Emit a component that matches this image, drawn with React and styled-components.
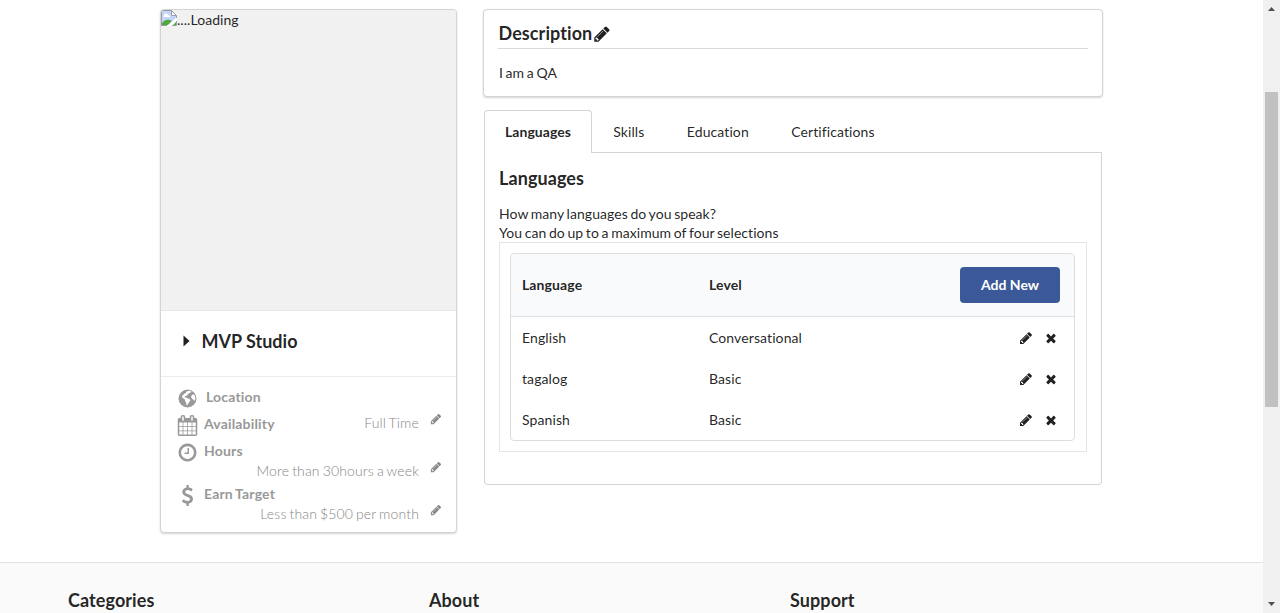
import React from 'react';
import styled, { createGlobalStyle } from 'styled-components';

const GlobalStyle = createGlobalStyle`
  *, *::before, *::after { box-sizing: border-box; }
  html, body { margin: 0; height: 100%; overflow: hidden; background: #fff; }
  body {
    font: 400 14px/19px Lato, "Liberation Sans", sans-serif;
    color: rgba(0, 0, 0, 0.87);
    letter-spacing: 0.05px;
    word-spacing: -1px;
  }
  svg { display: block; fill: currentColor; flex: none; }
  h3, p { margin: 0; }
`;

const Window = styled.div`
  display: flex;
  height: 613px;
  overflow: hidden;
`;
const Page = styled.div`
  flex: 1;
  min-width: 0;
  display: flex;
  flex-direction: column;
`;
const Columns = styled.main`
  display: flex;
  align-items: flex-start;
  gap: 26px;
  height: 562px;
  padding: 9px 0 0 160px;
`;

const Panel = styled.section`
  border: 1px solid #d4d4d5;
  border-radius: 4px;
  box-shadow: 0 1px 2px #d4d4d5;
  background: #fff;
  overflow: hidden;
`;
const ProfileCard = styled(Panel)`
  width: 297px;
  height: 524px;
`;
const Photo = styled.div`
  display: flex;
  align-items: flex-start;
  height: 300px;
  background: #f1f1f1;
`;
const Owner = styled.div`
  display: flex;
  align-items: center;
  height: 67px;
  padding: 0 0 4px 20px;
  border-top: 1px solid #e6e6e6;
  border-bottom: 1px solid #ececec;
`;
const Heading = styled.h3`
  font-size: 18px;
  line-height: 23px;
  font-weight: 700;
  letter-spacing: 0.08px;
  word-spacing: 0;
`;
const OwnerName = styled(Heading)`
  padding-left: 10.5px;
  letter-spacing: 0;
`;
const Details = styled.div`
  padding: 10px 14px 0 16px;
  color: #999;
`;
const Detail = styled.div`
  display: flex;
  flex-wrap: ${(p) => (p.$stacked ? 'wrap' : 'nowrap')};
  align-content: flex-start;
  height: ${(p) => (p.$stacked ? 43 : 27)}px;
`;
const DetailIcon = styled.div`
  display: flex;
  justify-content: center;
  width: 21px;
  height: 20px;
  padding-top: 1px;
`;
const DetailLabel = styled.span`
  font-weight: 700;
  letter-spacing: 0.17px;
  padding-left: ${(p) => (p.$inset ? 8 : 6)}px;
`;
const DetailValue = styled.div`
  display: flex;
  flex: 1 0 ${(p) => (p.$stacked ? '100%' : 'auto')};
  justify-content: flex-end;
  gap: 11px;
  margin-top: ${(p) => (p.$stacked ? 0 : -1)}px;
  font-weight: 300;
  letter-spacing: 0.15px;
  color: #868686;
`;

const Content = styled.div`
  width: 620px;
`;
const Description = styled(Panel)`
  height: 88px;
  padding: 12px 14px 0;
`;
const DescriptionTitle = styled.div`
  display: flex;
  height: 27px;
  padding-left: 0.5px;
  border-bottom: 1px solid #d9d9d9;
`;
const TitleIcon = styled.span`
  padding: 3px 0 0 1px;
`;
const DescriptionText = styled.p`
  padding: 14px 0 0 1px;
`;
const Tabs = styled.nav`
  display: flex;
  height: 43px;
  margin: 13px 1px 0;
`;
const Tab = styled.div`
  padding: ${(p) => (p.$active ? '11px 20px 0' : '12px 21.2px 0')};
  border: 1px solid #d4d4d5;
  border-width: ${(p) => (p.$active ? '1px 1px 0' : '0 0 1px')};
  border-radius: ${(p) => (p.$active ? '4px 4px 0 0' : '0')};
  font-weight: ${(p) => (p.$active ? 700 : 400)};
  letter-spacing: ${(p) => (p.$active ? 0.05 : 0.1)}px;
`;
const TabLine = styled.div`
  flex: 1;
  border-bottom: 1px solid #d4d4d5;
`;
const TabBody = styled.section`
  height: 332px;
  margin: 0 1px;
  padding: 14px 14px 0;
  border: 1px solid #d4d4d5;
  border-top: 0;
  border-radius: 0 0 4px 4px;
`;
const Hint = styled.p`
  padding-top: 14px;
  white-space: pre-line;
`;
const TableFrame = styled.div`
  height: 210px;
  padding: 10px 11px 0 10px;
  border: 1px solid #e4e5e6;
`;
const Table = styled.div`
  height: 188px;
  border: 1px solid #dcdddd;
  border-radius: 4px;
  overflow: hidden;
`;
const Row = styled.div`
  display: grid;
  grid-template-columns: 187px 1fr auto;
  align-items: center;
  height: 41px;
  padding: 0 16px 0 11px;
  letter-spacing: 0.1px;
`;
const HeadRow = styled(Row)`
  height: 63px;
  padding-right: 14px;
  background: #f9fafb;
  border-bottom: 1px solid #dfe2e4;
  font-weight: 700;
`;
const HeadCell = styled.span`
  padding-bottom: 1px;
`;
const AddButton = styled.button`
  width: 100px;
  height: 36px;
  border: 0;
  border-radius: 4px;
  background: #3b5998;
  color: #fff;
  font: 700 14px/14px Lato, sans-serif;
`;
const Actions = styled.div`
  display: flex;
  gap: 11px;
`;

const Footer = styled.footer`
  display: grid;
  grid-template-columns: 361px 361px 1fr;
  flex: 1;
  padding: 26px 0 0 68px;
  border-top: 1px solid #e2e3e3;
  background: #fafafa;
`;

const ScrollTrack = styled.div`
  display: flex;
  flex-direction: column;
  align-items: center;
  width: 17px;
  padding: 7px 2px 0;
  background: #f0f0f0;
`;
const ScrollThumb = styled.div`
  flex: none;
  width: 13px;
  height: 315px;
  margin: 81px 0 195px;
  background: #c1c1c1;
`;

const paths = {
  pencil:
    'M491 1536l91-91-235-235-91 91v107h128v128h107zm523-928q0-22-22-22-10 0-17 7l-542 542q-7 7-7 17 0 22 22 22 10 0 17-7l542-542q7-7 7-17zm-54-192l416 416-832 832h-416v-416zm683 96q0 53-37 90l-166 166-416-416 166-165q36-38 90-38 53 0 91 38l235 234q37 39 37 91z',
  times:
    'M1490 1322q0 40-28 68l-136 136q-28 28-68 28t-68-28l-294-294-294 294q-28 28-68 28t-68-28l-136-136q-28-28-28-68t28-68l294-294-294-294q-28-28-28-68t28-68l136-136q28-28 68-28t68 28l294 294 294-294q28-28 68-28t68 28l136 136q28 28 28 68t-28 68l-294 294 294 294q28 28 28 68z',
  calendar:
    'M192 1664h288v-288h-288v288zm352 0h320v-288h-320v288zm-352-352h288v-320h-288v320zm352 0h320v-320h-320v320zm-352-384h288v-288h-288v288zm736 736h320v-288h-320v288zm-384-736h320v-288h-320v288zm768 736h288v-288h-288v288zm-384-352h320v-320h-320v320zm-352-864v-288q0-13-9.5-22.5t-22.5-9.5h-64q-13 0-22.5 9.5t-9.5 22.5v288q0 13 9.5 22.5t22.5 9.5h64q13 0 22.5-9.5t9.5-22.5zm736 864h288v-320h-288v320zm-384-384h320v-288h-320v288zm384 0h288v-288h-288v288zm32-480v-288q0-13-9.5-22.5t-22.5-9.5h-64q-13 0-22.5 9.5t-9.5 22.5v288q0 13 9.5 22.5t22.5 9.5h64q13 0 22.5-9.5t9.5-22.5zm384-64v1280q0 52-38 90t-90 38h-1408q-52 0-90-38t-38-90v-1280q0-52 38-90t90-38h128v-96q0-66 47-113t113-47h64q66 0 113 47t47 113v96h384v-96q0-66 47-113t113-47h64q66 0 113 47t47 113v96h128q52 0 90 38t38 90z',
  clock:
    'M1024 544v448q0 14-9 23t-23 9h-320q-14 0-23-9t-9-23v-64q0-14 9-23t23-9h224v-352q0-14 9-23t23-9h64q14 0 23 9t9 23zm416 352q0-148-73-273t-198-198-273-73-273 73-198 198-73 273 73 273 198 198 273 73 273-73 198-198 73-273zm224 0q0 209-103 385.5t-279.5 279.5-385.5 103-385.5-103-279.5-279.5-103-385.5 103-385.5 279.5-279.5 385.5-103 385.5 103 279.5 279.5 103 385.5z',
  dollar:
    'M1362 1185q0 153-99.5 263.5t-258.5 136.5v175q0 14-9 23t-23 9h-135q-13 0-22.5-9.5t-9.5-22.5v-175q-66-9-127.5-31t-101.5-44.5-74-48-46.5-37.5-17.5-18q-17-21-2-41l103-135q7-10 23-12 15-2 24 9l2 2q113 99 243 125 37 8 74 8 81 0 142.5-43t61.5-122q0-28-15-53t-33.5-42-58.5-37.5-66-32-80-32.5q-39-16-61.5-25t-61.5-26.5-62.5-31-56.5-35.5-53.5-42.5-43.5-49-35.5-58-21-66.5-8.5-78q0-138 98-242t255-134v-180q0-13 9.5-22.5t22.5-9.5h135q14 0 23 9t9 23v176q57 6 110.5 23t87 33.5 63.5 37.5 39 29 15 14q17 18 5 38l-81 146q-8 15-23 16-14 3-27-7-3-3-14.5-12t-39-26.5-58.5-32-74.5-26-85.5-11.5q-95 0-155 43t-60 111q0 26 8.5 48t29.5 41.5 39.5 33 56 31 60.5 27 70 27.5q53 20 81 31.5t76 35 75.5 42.5 62 50 53 63.5 31.5 76.5 13 94z',
  globe:
    'M896 128a768 768 0 1 0 0 1536a768 768 0 1 0 0-1536zM960 225L1130 250L1250 330L1180 370L1100 420L1010 440L940 540L850 610L790 690L680 700L640 760L720 820L850 840L940 900L1100 970L1140 1060L1060 1180L980 1270L900 1420L860 1500L790 1390L780 1240L690 1130L680 1010L600 920L480 850L430 740L460 620L590 560L650 470L760 430L790 330L880 280zM1270 620L1380 540L1490 600L1550 740L1570 900L1530 1040L1460 1080L1400 980L1300 930L1230 840L1200 720z',
};

const Icon = ({ name, size = 14 }) => (
  <svg width={size} height={size} viewBox="0 0 1792 1792" fillRule="evenodd" aria-hidden="true">
    <path d={paths[name]} />
  </svg>
);

const BrokenImage = () => (
  <svg width="16" height="16" viewBox="0 0 16 16" aria-hidden="true">
    <path fill="#fff" d="M0 0h11l5 5v11H0z" />
    <path fill="#c3d5f8" d="M1 1h9v5h5v3L9 15H1z" />
    <path fill="#fff" d="M3 6a2 2 0 0 1 4-1 2 2 0 0 1 2 2H2z" />
    <path fill="#51a83f" d="M1 15v-2c2-3 5-4 8-3l2 1-4 4zM12 15l3-3v3z" />
    <path fill="#fff" d="M6 16L16 7v3l-6 6z" />
    <path fill="none" stroke="#9b9ba5" d="M.5 16V.5h10l5 5V8M10.500.5v5h5M0 15.500h6M11 15.500h4.500V11" />
  </svg>
);

const tabs = ['Skills', 'Education', 'Certifications'];
const languages = [
  ['English', 'Conversational'],
  ['tagalog', 'Basic'],
  ['Spanish', 'Basic'],
];

const Value = ({ stacked, children }) => (
  <DetailValue $stacked={stacked}>
    <span>{children}</span>
    <Icon name="pencil" size={12} />
  </DetailValue>
);

export default function App() {
  return (
    <Window>
      <GlobalStyle />
      <Page>
        <Columns>
          <ProfileCard>
            <Photo>
              <BrokenImage />
              <span>....Loading</span>
            </Photo>
            <Owner>
              <svg width="10" height="14" viewBox="0 0 10 14">
                <path d="M2.500 .5L8.500 6L2.500 11.500z" />
              </svg>
              <OwnerName>MVP Studio</OwnerName>
            </Owner>
            <Details>
              <Detail>
                <DetailIcon><Icon name="globe" size={21} /></DetailIcon>
                <DetailLabel $inset>Location</DetailLabel>
              </Detail>
              <Detail>
                <DetailIcon><Icon name="calendar" size={21} /></DetailIcon>
                <DetailLabel>Availability</DetailLabel>
                <Value>Full Time</Value>
              </Detail>
              <Detail $stacked>
                <DetailIcon><Icon name="clock" size={21} /></DetailIcon>
                <DetailLabel>Hours</DetailLabel>
                <Value stacked>More than 30hours a week</Value>
              </Detail>
              <Detail $stacked>
                <DetailIcon><Icon name="dollar" size={21} /></DetailIcon>
                <DetailLabel>Earn Target</DetailLabel>
                <Value stacked>Less than $500 per month</Value>
              </Detail>
            </Details>
          </ProfileCard>
          <Content>
            <Description>
              <DescriptionTitle>
                <Heading>Description</Heading>
                <TitleIcon><Icon name="pencil" size={18} /></TitleIcon>
              </DescriptionTitle>
              <DescriptionText>I am a QA</DescriptionText>
            </Description>
            <Tabs>
              <Tab $active>Languages</Tab>
              {tabs.map((t) => <Tab key={t}>{t}</Tab>)}
              <TabLine />
            </Tabs>
            <TabBody>
              <Heading>Languages</Heading>
              <Hint>{'How many languages do you speak?\nYou can do up to a maximum of four selections'}</Hint>
              <TableFrame>
                <Table>
                  <HeadRow>
                    <HeadCell>Language</HeadCell>
                    <HeadCell>Level</HeadCell>
                    <AddButton>Add New</AddButton>
                  </HeadRow>
                  {languages.map(([name, level]) => (
                    <Row key={name}>
                      <span>{name}</span>
                      <span>{level}</span>
                      <Actions>
                        <Icon name="pencil" />
                        <Icon name="times" />
                      </Actions>
                    </Row>
                  ))}
                </Table>
              </TableFrame>
            </TabBody>
          </Content>
        </Columns>
        <Footer>
          <Heading>Categories</Heading>
          <Heading>About</Heading>
          <Heading>Support</Heading>
        </Footer>
      </Page>
      <ScrollTrack>
        <svg width="7" height="4" viewBox="0 0 7 4"><path fill="#505050" d="M0 4l3.500-4L7 4z" /></svg>
        <ScrollThumb />
        <svg width="7" height="4" viewBox="0 0 7 4"><path fill="#505050" d="M0 0l3.500 4L7 0z" /></svg>
      </ScrollTrack>
    </Window>
  );
}
